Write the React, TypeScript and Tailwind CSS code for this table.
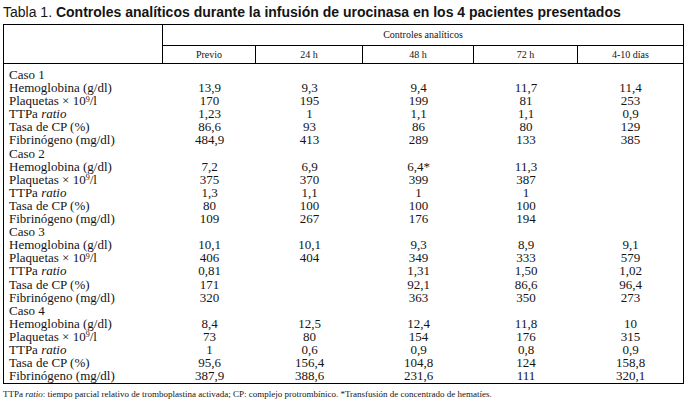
import React from "react";

type Row = { label: React.ReactNode; vals: string[] };

const plaq = (
  <>
    Plaquetas × 10<sup className="text-[8px] top-[-0.45em]">9</sup>/l
  </>
);
const ttpa = (
  <>
    TTPa <i>ratio</i>
  </>
);

const cases: { name: string; rows: Row[] }[] = [
  {
    name: "Caso 1",
    rows: [
      { label: "Hemoglobina (g/dl)", vals: ["13,9", "9,3", "9,4", "11,7", "11,4"] },
      { label: plaq, vals: ["170", "195", "199", "81", "253"] },
      { label: ttpa, vals: ["1,23", "1", "1,1", "1,1", "0,9"] },
      { label: "Tasa de CP (%)", vals: ["86,6", "93", "86", "80", "129"] },
      { label: "Fibrinógeno (mg/dl)", vals: ["484,9", "413", "289", "133", "385"] },
    ],
  },
  {
    name: "Caso 2",
    rows: [
      { label: "Hemoglobina (g/dl)", vals: ["7,2", "6,9", "6,4*", "11,3", ""] },
      { label: plaq, vals: ["375", "370", "399", "387", ""] },
      { label: ttpa, vals: ["1,3", "1,1", "1", "1", ""] },
      { label: "Tasa de CP (%)", vals: ["80", "100", "100", "100", ""] },
      { label: "Fibrinógeno (mg/dl)", vals: ["109", "267", "176", "194", ""] },
    ],
  },
  {
    name: "Caso 3",
    rows: [
      { label: "Hemoglobina (g/dl)", vals: ["10,1", "10,1", "9,3", "8,9", "9,1"] },
      { label: plaq, vals: ["406", "404", "349", "333", "579"] },
      { label: ttpa, vals: ["0,81", "", "1,31", "1,50", "1,02"] },
      { label: "Tasa de CP (%)", vals: ["171", "", "92,1", "86,6", "96,4"] },
      { label: "Fibrinógeno (mg/dl)", vals: ["320", "", "363", "350", "273"] },
    ],
  },
  {
    name: "Caso 4",
    rows: [
      { label: "Hemoglobina (g/dl)", vals: ["8,4", "12,5", "12,4", "11,8", "10"] },
      { label: plaq, vals: ["73", "80", "154", "176", "315"] },
      { label: ttpa, vals: ["1", "0,6", "0,9", "0,8", "0,9"] },
      { label: "Tasa de CP (%)", vals: ["95,6", "156,4", "104,8", "124", "158,8"] },
      { label: "Fibrinógeno (mg/dl)", vals: ["387,9", "388,6", "231,6", "111", "320,1"] },
    ],
  },
];

const heads = ["Previo", "24 h", "48 h", "72 h", "4-10 días"];
const headW = ["w-[93px] border-r", "w-[107px] border-r", "w-[111px] border-r", "w-[104px] border-r", "w-[105px]"];

export default function App() {
  return (
    <div className="w-[689px] h-[403px] bg-white overflow-hidden text-[#141414]">
      <div className="ml-[3px] w-[681px]">
        <div className="h-[24px] pt-[4px] text-[14px] leading-[16px] [font-family:'Liberation_Sans',Arial,sans-serif] whitespace-nowrap">
          Tabla 1. <b>Controles analíticos durante la infusión de urocinasa en los 4 pacientes presentados</b>
        </div>
        <div className="border border-black [font-family:'Liberation_Serif','Times_New_Roman',serif]">
          <div className="flex h-[39px] border-b border-black">
            <div className="w-[159px] border-r border-black" />
            <div className="flex flex-col flex-1">
              <div className="h-[21px] border-b border-black flex items-center justify-center text-[10px] leading-none">
                Controles analíticos
              </div>
              <div className="flex h-[17px]">
                {heads.map((h, i) => (
                  <div
                    key={h}
                    className={`${headW[i]} border-black flex items-center justify-center text-[10px] leading-none`}
                  >
                    {h}
                  </div>
                ))}
              </div>
            </div>
          </div>
          <div className="pt-[4px] pb-[1px] grid grid-cols-[159px_93px_107px_111px_104px_105px] text-[13px] leading-[13.1px]">
            {cases.map((c) => (
              <React.Fragment key={c.name}>
                <div className="pl-[5px] col-span-6 h-[13.1px]">{c.name}</div>
                {c.rows.map((r, ri) => (
                  <React.Fragment key={ri}>
                    <div className="pl-[5px] h-[13.1px] whitespace-nowrap">{r.label}</div>
                    {r.vals.map((v, vi) => (
                      <div key={vi} className="h-[13.1px] text-center">
                        {v}
                      </div>
                    ))}
                  </React.Fragment>
                ))}
              </React.Fragment>
            ))}
          </div>
        </div>
        <div className="mt-[5px] text-[9px] leading-[10px] [font-family:'Liberation_Serif','Times_New_Roman',serif] whitespace-nowrap">
          TTPa <i>ratio</i>: tiempo parcial relativo de tromboplastina activada; CP: complejo protrombínico. *Transfusión de concentrado de hematíes.
        </div>
      </div>
    </div>
  );
}
